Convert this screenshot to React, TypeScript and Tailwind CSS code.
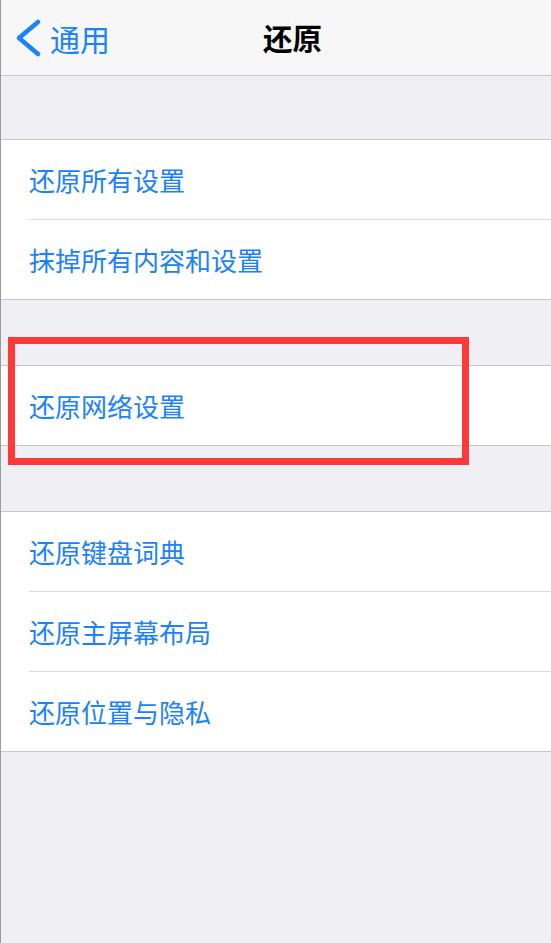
import React from 'react';

const groups: string[][] = [
  ['还原所有设置', '抹掉所有内容和设置'],
  ['还原网络设置'],
  ['还原键盘词典', '还原主屏幕布局', '还原位置与隐私'],
];

const font = { fontFamily: '"Noto Sans CJK SC", "Noto Sans", sans-serif' };

export default function App() {
  return (
    <div
      className="relative min-h-[943px] w-full overflow-hidden bg-[#efeff4] border-l border-[#9b9b9b]"
      style={font}
    >
      {/* nav bar */}
      <div className="flex h-[76px] items-center border-b border-[#c8c7cc] bg-[#f7f7f8]">
        <button className="flex items-center pl-[13px] text-[#1a82fb]">
          <svg width="28" height="40" viewBox="0 0 28 40" className="mt-[1px]">
            <path
              d="M24 4 L5 20 L24 36"
              fill="none"
              stroke="#1a82fb"
              strokeWidth="4.6"
              strokeLinecap="round"
              strokeLinejoin="round"
            />
          </svg>
          <span className="ml-[8px] text-[30px] leading-none">通用</span>
        </button>
        <h1 className="ml-[153px] text-[29.5px] font-semibold leading-none text-black">还原</h1>
      </div>

      {groups.map((rows, gi) => (
        <div key={gi} className={gi === 0 ? 'pt-[63px]' : 'pt-[65px]'}>
          <div className="border-t border-[#c8c7cc] bg-white">
            {rows.map((label, ri) => (
              <div key={label} className="pl-[28px]">
                <div
                  className={`flex h-[80px] items-center border-b ${
                    ri === rows.length - 1 ? '-ml-[28px] pl-[28px] border-[#c8c7cc]' : 'border-[#dcdcdf]'
                  }`}
                >
                  <span className="text-[26px] leading-none text-[#1a82fb]">{label}</span>
                </div>
              </div>
            ))}
          </div>
        </div>
      ))}

      {/* highlight box */}
      <div className="pointer-events-none absolute left-[7px] top-[337px] h-[128px] w-[461px] border-[7px] border-[#fc3a3a]" />
    </div>
  );
}
